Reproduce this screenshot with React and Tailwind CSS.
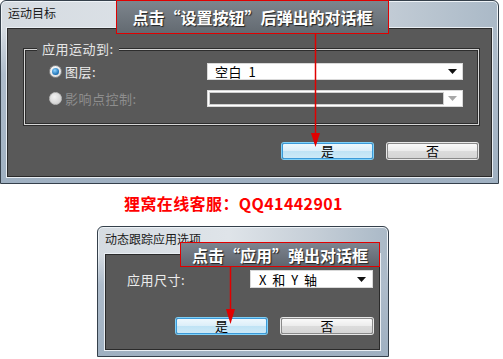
import React from "react";

const FONT = { fontFamily: '"Noto Sans CJK SC", "Noto Sans", sans-serif' };

function Radio({ checked, disabled }) {
  if (disabled) {
    return (
      <span className="w-[13px] h-[13px] rounded-full bg-[radial-gradient(circle_at_40%_35%,#f2f2f2,#c8c8c8)] border border-[#bdbdbd] shrink-0" />
    );
  }
  return (
    <span className="w-[13px] h-[13px] rounded-full bg-[radial-gradient(circle_at_40%_35%,#ffffff,#d4d4d4)] border border-[#8a8a8a] shrink-0 flex items-center justify-center">
      {checked && (
        <span className="w-[7px] h-[7px] rounded-full bg-[radial-gradient(circle_at_40%_35%,#8fd3ff,#1a6fb3_70%,#0b4a80)]" />
      )}
    </span>
  );
}

function Arrow({ disabled }) {
  return (
    <svg width="9" height="5" viewBox="0 0 9 5">
      <polygon points="0,0 9,0 4.5,5" fill={disabled ? "#a8a8a8" : "#111"} />
    </svg>
  );
}

function Button({ label, primary, w }) {
  if (primary) {
    return (
      <div
        className={`${w} h-[16px] rounded-[2px] border border-[#3c9ad8] shadow-[0_0_0_1px_#7fd0f8] bg-[linear-gradient(180deg,#eef8fd_0%,#dbeef9_50%,#bfe3f5_51%,#cde9f7_100%)] flex items-center justify-center text-[13px] leading-none text-black`}
      >
        <span className="-mt-[1px]">{label}</span>
      </div>
    );
  }
  return (
    <div
      className={`${w} h-[16px] rounded-[2px] border border-[#8a8a8a] shadow-[0_0_0_1px_#e8e8e8] bg-[linear-gradient(180deg,#fafafa_0%,#ececec_50%,#dcdcdc_51%,#d6d6d6_100%)] flex items-center justify-center text-[13px] leading-none text-black`}
    >
      <span className="-mt-[1px]">{label}</span>
    </div>
  );
}

function Frame({ title, className, children, contentClass }) {
  return (
    <div
      className={`${className} rounded-t-[6px] border border-[#35404b] bg-[linear-gradient(90deg,#d5dbe1_0%,#dfe4e9_45%,#c5ced7_75%,#aab9c7_100%)] shadow-[inset_0_0_0_1px_#eef3f7] flex flex-col`}
    >
      <div className="h-[27px] shrink-0 pl-[7px] pt-[4px] text-[12px] leading-[16px] text-[#1b1b1b]">
        {title}
      </div>
      <div className="flex-1 flex flex-col bg-[linear-gradient(180deg,transparent_0%,#aebccb_30%,#9fb0c1_100%)]">
        <div
          className={`${contentClass} bg-[#595959] border border-[#2a2a2a] shadow-[0_0_0_1px_#e9eef3] flex flex-col`}
        >
          {children}
        </div>
      </div>
    </div>
  );
}

export default function App() {
  return (
    <div className="w-[503px] h-[359px] bg-white relative overflow-hidden" style={FONT}>
      {/* Dialog 1 */}
      <Frame
        title="运动目标"
        className="w-[499px] h-[184px]"
        contentClass="mx-[6px] h-[149px]"
      >
        <div className="relative ml-[16px] mt-[20px] w-[455px] h-[76px] border border-[#d6d6d6] shadow-[0_0_0_1px_#2d2d2d,inset_0_0_0_1px_#2d2d2d]">
          <span className="absolute -top-[10px] left-[12px] px-[5px] bg-[#595959] text-[13px] leading-[18px] tracking-[0.5px] text-[#e6e6e6]">
            应用运动到:
          </span>
          <div className="pl-[24px] pt-[13px] flex flex-col gap-[10px]">
            <div className="flex items-center h-[17px]">
              <div className="w-[158px] flex items-center">
                <Radio checked />
                <span className="ml-[3px] text-[13px] leading-none tracking-[0.5px] text-[#ececec]">图层:</span>
              </div>
              <div className="w-[256px] h-[17px] bg-white border border-[#d9d9d9] flex items-center justify-between pl-[7px] pr-[5px]">
                <span className="text-[13px] leading-none tracking-[0.5px] text-black [word-spacing:3px]">空白 1</span>
                <Arrow />
              </div>
            </div>
            <div className="flex items-center h-[17px]">
              <div className="w-[158px] flex items-center">
                <Radio disabled />
                <span className="ml-[3px] text-[13px] leading-none tracking-[0.5px] text-[#8e8e8e]">影响点控制:</span>
              </div>
              <div className="w-[256px] h-[17px] bg-white border border-[#d9d9d9] flex items-stretch p-[1px]">
                <div className="flex-1 bg-[#595959] border border-[#d0d0d0]" />
                <div className="w-[17px] flex items-center justify-center">
                  <Arrow disabled />
                </div>
              </div>
            </div>
          </div>
        </div>
        <div className="flex mt-[18px] ml-[274px] gap-[14px]">
          <Button label="是" primary w="w-[91px]" />
          <Button label="否" w="w-[91px]" />
        </div>
      </Frame>

      {/* Red contact line */}
      <div className="mt-[11px] pl-[124px] text-[16px] leading-[16px] font-bold tracking-[0.4px] text-[#ff0000]">
        狸窝在线客服：QQ41442901
      </div>

      {/* Dialog 2 */}
      <Frame
        title="动态跟踪应用选项"
        className="mt-[15px] ml-[97px] w-[292px] h-[131px]"
        contentClass="ml-[7px] mr-[8px] h-[96px]"
      >
        <div className="flex items-center mt-[15px] h-[18px]">
          <span className="ml-[21px] w-[123px] text-[13px] leading-none tracking-[0.5px] text-[#ececec]">应用尺寸:</span>
          <div className="w-[123px] h-[18px] bg-white border border-[#d9d9d9] flex items-center justify-between pl-[8px] pr-[6px]">
            <span className="text-[13px] leading-none text-black [word-spacing:3px]">X 和 Y 轴</span>
            <Arrow />
          </div>
        </div>
        <div className="flex mt-[30px] ml-[70px] gap-[14px]">
          <Button label="是" primary w="w-[91px]" />
          <Button label="否" w="w-[92px]" />
        </div>
      </Frame>

      {/* Annotation 1 */}
      <div className="absolute left-[116px] top-0 w-[273px] h-[34px] border border-[#e00000] bg-[linear-gradient(180deg,#7d858d_0%,#636a71_100%)] flex items-center justify-center">
        <span className="text-[16px] leading-none font-bold text-white [text-shadow:1px_1px_1px_#222]">
          点击“设置按钮”后弹出的对话框
        </span>
      </div>
      <svg className="absolute left-0 top-0 pointer-events-none" width="503" height="359">
        <line x1="315.5" y1="34" x2="315.5" y2="136" stroke="#e00000" strokeWidth="1.5" />
        <polygon points="311,133 320,133 315.5,147" fill="#e00000" />
        <line x1="230.5" y1="267" x2="230.5" y2="313" stroke="#e00000" strokeWidth="1.5" />
        <polygon points="226,309 235,309 230.5,324" fill="#e00000" />
      </svg>

      {/* Annotation 2 */}
      <div className="absolute left-[180px] top-[242px] w-[200px] h-[25px] border border-[#e00000] bg-[linear-gradient(180deg,#7d8490_0%,#60666e_100%)] flex items-center justify-center">
        <span className="text-[16px] leading-none font-bold text-white [text-shadow:1px_1px_1px_#222]">
          点击“应用”弹出对话框
        </span>
      </div>
    </div>
  );
}
